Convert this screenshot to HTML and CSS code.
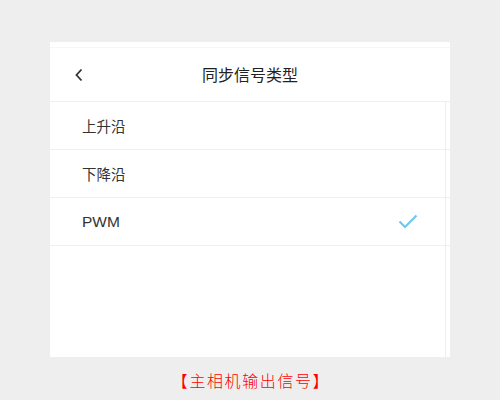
FILE: index.html
```html
<!DOCTYPE html>
<html lang="zh">
<head>
<meta charset="utf-8">
<link rel="stylesheet" href="styles.css">
</head>
<body>
<div class="page">
  <div class="card">
    <div class="status"></div>
    <div class="header">
      <span class="back"><svg width="10" height="14" viewBox="0 0 10 14"><path d="M7.5 1.5 L2.5 7 L7.5 12.5" fill="none" stroke="#333" stroke-width="1.8"/></svg></span>
      <span class="title">同步信号类型</span>
    </div>
    <div class="list">
      <div class="row"><span>上升沿</span></div>
      <div class="row"><span>下降沿</span></div>
      <div class="row"><span class="latin">PWM</span><svg class="check" width="20" height="15" viewBox="0 0 20 15"><path d="M1.5 7.5 L7 13 L18.5 1.5" fill="none" stroke="#6cc8f4" stroke-width="2.2"/></svg></div>
    </div>
  </div>
  <div class="caption">【主相机输出信号】</div>
</div>
</body>
</html>
```
FILE: styles.css
```css
html, body {
  margin: 0;
  padding: 0;
  background: #eeeeee;
  font-family: "Noto Sans CJK SC", "Liberation Sans", sans-serif;
}
.page {
  width: 500px;
  height: 400px;
  padding-top: 42px;
  box-sizing: border-box;
  display: flex;
  flex-direction: column;
  align-items: center;
}
.card {
  width: 400px;
  height: 315px;
  background: #fff;
  display: flex;
  flex-direction: column;
}
.status {
  height: 5px;
  border-bottom: 1px solid #f6f6f6;
}
.header {
  height: 53px;
  border-bottom: 1px solid #f0f0f0;
  display: flex;
  align-items: center;
  justify-content: center;
  position: relative;
}
.back {
  position: absolute;
  left: 24px;
  top: 20px;
  display: flex;
}
.title {
  font-size: 16px;
  color: #222;
  line-height: 20px;
  margin-top: -2px;
}
.list {
  flex: 1;
  background: linear-gradient(to right, transparent 395px, #eeeeee 395px, #eeeeee 396px, transparent 396px);
}
.row {
  height: 47px;
  border-bottom: 1px solid #f0f0f0;
  display: flex;
  align-items: center;
  justify-content: space-between;
  padding: 0 32px 0 32px;
  font-size: 14.5px;
  color: #333;
}
.row span {
  font-family: "Liberation Sans", "Noto Sans CJK SC", sans-serif;
}
.row .latin {
  font-size: 15.5px;
}
.caption {
  margin-top: 13px;
  font-size: 16px;
  line-height: 20px;
  color: #ff0000;
  font-weight: 300;
  letter-spacing: 1.6px;
  margin-left: 2px;
}
```
